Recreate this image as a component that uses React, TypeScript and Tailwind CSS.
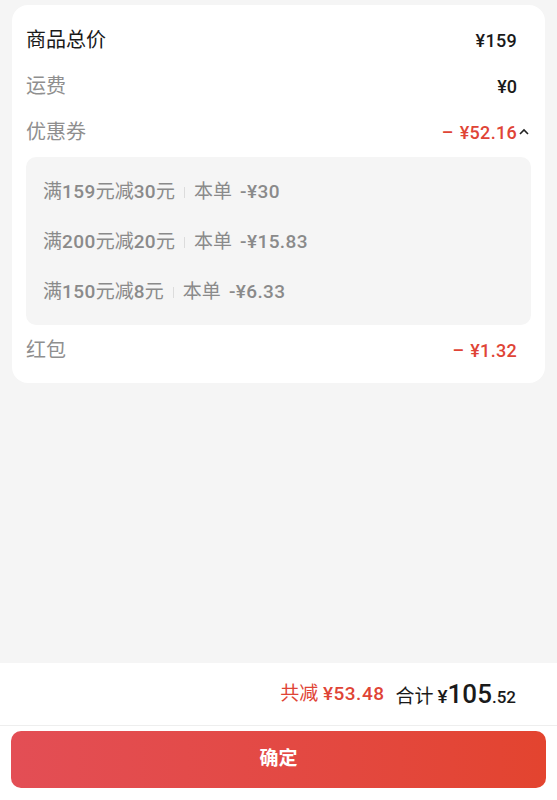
import React from "react";

const coupons = [
  { rule: "满159元减30元", amt: "-¥30" },
  { rule: "满200元减20元", amt: "-¥15.83" },
  { rule: "满150元减8元", amt: "-¥6.33" },
];

function Mixed({ text }: { text: string }) {
  const parts = text.split(/([0-9.¥\-]+)/).filter(Boolean);
  return (
    <>
      {parts.map((p, i) =>
        /[0-9.¥\-]/.test(p) ? (
          <span key={i} className="font-medium tracking-[0.4px]">{p}</span>
        ) : (
          <span key={i}>{p}</span>
        )
      )}
    </>
  );
}

export default function App() {
  return (
    <div className="w-[557px] h-[800px] bg-[#f5f5f5] flex flex-col font-['Roboto','Noto_Sans_CJK_SC',sans-serif]">
      <div className="flex-1">
        <div className="mx-[12px] mt-[5px] bg-white rounded-[16px] px-[14px] pt-[12px] pb-[8px]">
          <div className="h-[46px] flex items-center justify-between">
            <span className="text-[20px] text-[#1a1a1a]">商品总价</span>
            <span className="text-[18px] font-medium tracking-[0.3px] text-[#1a1a1a] mr-[14px]">¥159</span>
          </div>
          <div className="h-[46px] flex items-center justify-between">
            <span className="text-[20px] text-[#8f8f8f]">运费</span>
            <span className="text-[18px] font-medium text-[#1a1a1a] mr-[14px]">¥0</span>
          </div>
          <div className="h-[46px] flex items-center justify-between">
            <span className="text-[20px] text-[#8f8f8f]">优惠券</span>
            <span className="flex items-center">
              <span className="text-[18px] font-medium tracking-[0.3px] text-[#df4436]">
                –<span className="ml-[6px]">¥52.16</span>
              </span>
              <svg width="14" height="10" viewBox="0 0 14 10">
                <polyline points="3,7 7,3 11,7" fill="none" stroke="#222" strokeWidth="1.6" />
              </svg>
            </span>
          </div>
          <div className="mt-[2px] bg-[#f5f5f5] rounded-[10px] pt-[10px] pb-[8px] px-[17px]">
            {coupons.map((c) => (
              <div key={c.rule} className="h-[50px] flex items-center text-[19px] text-[#8a8a8a]">
                <span><Mixed text={c.rule} /></span>
                <span className="mx-[9px] w-px h-[11px] bg-[#dcdcdc]" />
                <span>本单</span>
                <span className="ml-[8px]"><Mixed text={c.amt} /></span>
              </div>
            ))}
          </div>
          <div className="h-[50px] flex items-center justify-between">
            <span className="text-[20px] text-[#8f8f8f]">红包</span>
            <span className="text-[18px] font-medium tracking-[0.3px] text-[#df4436] mr-[14px]">
              –<span className="ml-[6px]">¥1.32</span>
            </span>
          </div>
        </div>
      </div>
      <div className="bg-white">
        <div className="h-[63px] flex items-center justify-end pr-[41px] border-b border-[#eeeeee]">
          <span className="text-[19px] text-[#df4436]">共减 <span className="font-medium tracking-[0.5px]">¥53.48</span></span>
          <span className="ml-[11px] text-[19px] text-[#1a1a1a] flex items-baseline">
            合计 <span className="ml-[4px] font-medium">¥</span>
            <span className="text-[26px] font-medium">105</span>
            <span className="text-[17px] font-medium">.52</span>
          </span>
        </div>
        <div className="h-[74px] px-[11px] pt-[5px]">
          <div className="h-[57px] rounded-[10px] bg-gradient-to-r from-[#e34e55] to-[#e3442f] flex items-center justify-center">
            <span className="text-white text-[19px] font-bold">确定</span>
          </div>
        </div>
      </div>
    </div>
  );
}
